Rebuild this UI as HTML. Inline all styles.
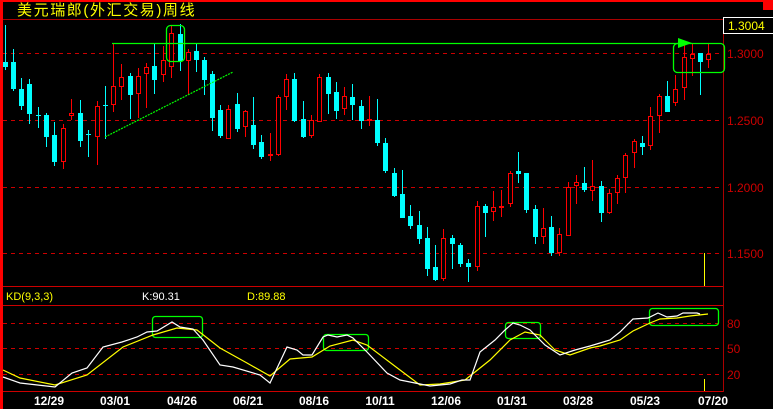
<!DOCTYPE html>
<html><head><meta charset="utf-8"><style>
html,body{margin:0;padding:0;background:#000;}
body{width:773px;height:409px;overflow:hidden;position:relative;}
svg{position:absolute;left:0;top:0;}
text{font-family:"Liberation Sans",sans-serif;}
</style></head><body>
<svg width="773" height="409" viewBox="0 0 773 409" xmlns="http://www.w3.org/2000/svg" shape-rendering="crispEdges">
<rect width="773" height="409" fill="#000"/>
<rect x="0" y="0" width="773" height="2" fill="#f00"/>
<rect x="0" y="0" width="3" height="409" fill="#f00"/>
<rect x="763" y="0" width="10" height="10" fill="#f00"/>
<text x="17" y="15" font-size="15" letter-spacing="1.6" fill="#ff0" style="font-family:'Liberation Sans','Noto Sans CJK SC',sans-serif">美元瑞郎(外汇交易)周线</text>
<line x1="3" y1="19.5" x2="723" y2="19.5" stroke="#a00"/>
<line x1="723.5" y1="19" x2="723.5" y2="392" stroke="#a00"/>
<g stroke="#c00" stroke-dasharray="4,4">
<line x1="3" y1="53.5" x2="722" y2="53.5"/><line x1="3" y1="120.5" x2="722" y2="120.5"/><line x1="3" y1="187.5" x2="722" y2="187.5"/><line x1="3" y1="253.5" x2="722" y2="253.5"/>
<line x1="3" y1="323.5" x2="722" y2="323.5"/><line x1="3" y1="348.5" x2="722" y2="348.5"/><line x1="3" y1="374.5" x2="722" y2="374.5"/>
</g>
<line x1="3" y1="286.5" x2="723" y2="286.5" stroke="#c00"/>
<line x1="3" y1="305.5" x2="723" y2="305.5" stroke="#c00"/>
<line x1="3" y1="391.5" x2="723" y2="391.5" stroke="#c00"/>
<rect x="723.5" y="17.5" width="50" height="16" fill="#000" stroke="#fff"/>
<text x="728" y="30" font-size="12" fill="#ff0">1.3004</text>
<g font-size="12" fill="#c00">
<text x="727" y="58">1.3000</text><text x="727" y="125">1.2500</text><text x="727" y="192">1.2000</text><text x="727" y="258">1.1500</text>
<text x="727" y="328">80</text><text x="727" y="353">50</text><text x="727" y="379">20</text>
</g>
<line x1="704.5" y1="253" x2="704.5" y2="286" stroke="#ff0"/>
<line x1="704.5" y1="379" x2="704.5" y2="391" stroke="#ff0"/>
<path fill="none" stroke="#0ff" d="M5.5 25V70M13.5 49V91M21.5 78V110M29.5 79V124M38.5 107V128M46.5 113V147M54.5 122V166M80.5 100V147M88.5 130V157M105.5 86V139M130.5 73V119M154.5 44V94M180.5 24V71M196.5 43V72M204.5 57V95M212.5 71V131M220.5 105V138M237.5 93V132M253.5 97V149M261.5 135V159M294.5 73V122M303.5 101V138M328.5 73V114M336.5 82V119M352.5 84V120M361.5 100V129M377.5 99V146M385.5 138V173M394.5 168V197M402.5 170V218M410.5 205V229M419.5 211V244M427.5 227V276M435.5 245V281M452.5 235V269M460.5 243V267M468.5 259V282M485.5 204V237M518.5 152V183M526.5 173V213M535.5 205V244M551.5 216V256M584.5 167V192M601.5 181V222M642.5 136V155M667.5 81V112M700.5 53V95"/>
<path fill="none" stroke="#f00" d="M63.5 124V169M71.5 99V120M97.5 101V165M113.5 43V112M121.5 64V100M138.5 68V118M146.5 63V108M163.5 46V82M171.5 26V78M188.5 49V95M228.5 105V139M245.5 110V137M270.5 133V161M278.5 95V156M286.5 74V110M311.5 115V138M319.5 74V122M344.5 87V115M369.5 96V126M443.5 229V281M477.5 201V271M493.5 191V221M501.5 190V217M510.5 171V207M543.5 208V244M559.5 228V256M568.5 182V236M576.5 175V204M592.5 160V201M609.5 189V214M617.5 175V204M625.5 153V193M634.5 139V168M650.5 107V150M659.5 94V133M675.5 75V106M684.5 43V100M692.5 44V76M708.5 43V68"/>
<g fill="#0ff">
<rect x="3" y="62" width="5" height="5"/><rect x="11" y="62" width="5" height="27"/><rect x="19" y="89" width="5" height="17"/><rect x="27" y="84" width="5" height="30"/><rect x="36" y="115" width="5" height="1"/><rect x="44" y="115" width="5" height="22"/><rect x="52" y="135" width="5" height="27"/><rect x="78" y="113" width="5" height="28"/><rect x="86" y="134" width="5" height="1"/><rect x="103" y="105" width="5" height="1"/><rect x="128" y="76" width="5" height="19"/><rect x="152" y="66" width="5" height="14"/><rect x="178" y="34" width="5" height="27"/><rect x="194" y="51" width="5" height="9"/><rect x="202" y="60" width="5" height="20"/><rect x="210" y="74" width="5" height="44"/><rect x="218" y="110" width="5" height="26"/><rect x="235" y="104" width="5" height="25"/><rect x="251" y="125" width="5" height="20"/><rect x="259" y="142" width="5" height="15"/><rect x="292" y="79" width="5" height="42"/><rect x="301" y="119" width="5" height="18"/><rect x="326" y="77" width="5" height="17"/><rect x="334" y="92" width="5" height="19"/><rect x="350" y="97" width="5" height="8"/><rect x="359" y="106" width="5" height="15"/><rect x="375" y="120" width="5" height="23"/><rect x="383" y="143" width="5" height="28"/><rect x="392" y="173" width="5" height="23"/><rect x="400" y="194" width="5" height="24"/><rect x="408" y="216" width="5" height="10"/><rect x="417" y="225" width="5" height="14"/><rect x="425" y="238" width="5" height="31"/><rect x="433" y="267" width="5" height="13"/><rect x="450" y="238" width="5" height="6"/><rect x="458" y="245" width="5" height="19"/><rect x="466" y="263" width="5" height="4"/><rect x="483" y="206" width="5" height="7"/><rect x="516" y="171" width="5" height="3"/><rect x="524" y="173" width="5" height="37"/><rect x="533" y="209" width="5" height="28"/><rect x="549" y="227" width="5" height="26"/><rect x="582" y="183" width="5" height="7"/><rect x="599" y="186" width="5" height="27"/><rect x="640" y="143" width="5" height="4"/><rect x="665" y="96" width="5" height="16"/><rect x="698" y="53" width="5" height="9"/>
</g>
<g fill="#000" stroke="#f00">
<rect x="61.5" y="128.5" width="4" height="33"/><rect x="69.5" y="113.5" width="4" height="2"/><rect x="95.5" y="106.5" width="4" height="30"/><rect x="111.5" y="86.5" width="4" height="18"/><rect x="119.5" y="77.5" width="4" height="9"/><rect x="136.5" y="76.5" width="4" height="17"/><rect x="144.5" y="67.5" width="4" height="6"/><rect x="161.5" y="60.5" width="4" height="14"/><rect x="169.5" y="33.5" width="4" height="33"/><rect x="186.5" y="52.5" width="4" height="8"/><rect x="226.5" y="109.5" width="4" height="29"/><rect x="243.5" y="111.5" width="4" height="15"/><rect x="268.5" y="154.5" width="4" height="1"/><rect x="276.5" y="97.5" width="4" height="57"/><rect x="284.5" y="79.5" width="4" height="17"/><rect x="309.5" y="120.5" width="4" height="15"/><rect x="317.5" y="77.5" width="4" height="44"/><rect x="342.5" y="96.5" width="4" height="12"/><rect x="367.5" y="119.5" width="4" height="1"/><rect x="441.5" y="238.5" width="4" height="40"/><rect x="475.5" y="206.5" width="4" height="60"/><rect x="491.5" y="207.5" width="4" height="4"/><rect x="499.5" y="206.5" width="4" height="1"/><rect x="508.5" y="173.5" width="4" height="30"/><rect x="541.5" y="228.5" width="4" height="8"/><rect x="557.5" y="234.5" width="4" height="18"/><rect x="566.5" y="187.5" width="4" height="48"/><rect x="574.5" y="182.5" width="4" height="3"/><rect x="590.5" y="186.5" width="4" height="4"/><rect x="607.5" y="193.5" width="4" height="19"/><rect x="615.5" y="178.5" width="4" height="14"/><rect x="623.5" y="155.5" width="4" height="22"/><rect x="632.5" y="141.5" width="4" height="11"/><rect x="648.5" y="116.5" width="4" height="29"/><rect x="657.5" y="96.5" width="4" height="19"/><rect x="673.5" y="89.5" width="4" height="13"/><rect x="682.5" y="57.5" width="4" height="30"/><rect x="690.5" y="54.5" width="4" height="4"/><rect x="706.5" y="54.5" width="4" height="5"/>
</g>
<g shape-rendering="auto">
<line x1="112" y1="43.5" x2="680" y2="43.5" stroke="#0f0" stroke-width="1.3"/>
<polygon points="678,38 678,48 692,43" fill="#0f0"/>
<line x1="105" y1="137" x2="233" y2="72" stroke="#0f0" stroke-width="1.2" stroke-dasharray="2,1"/>
<g fill="none" stroke="#0f0" stroke-width="1.3">
<rect x="166.5" y="25.5" width="18" height="36" rx="4"/>
<rect x="673.5" y="43.5" width="51" height="29" rx="4"/>
<rect x="152.5" y="316.5" width="50" height="21" rx="3"/>
<rect x="323.5" y="334.5" width="45" height="16" rx="3"/>
<rect x="505.5" y="322.5" width="35" height="16" rx="3"/>
<rect x="649.5" y="308.5" width="69" height="17" rx="3"/>
</g>
<polyline fill="none" stroke="#ff0" stroke-width="1.2" points="3,370 20,378 55,385 87,375 123,347 153,335 177,328 197,330 220,348 247,363 270,376 290,359 312,357 330,346 353,340 367,345 400,370 420,385 440,384 465,380 490,360 510,340 525,332 540,335 555,350 570,355 590,348 600,346 620,340 633,331 650,323 660,319 677,318 690,316 708,314"/>
<polyline fill="none" stroke="#fff" stroke-width="1.2" points="3,377 20,383 55,387 72,373 87,368 103,347 122,342 137,337 147,332 157,331 172,322 180,327 193,329 203,340 220,365 233,367 260,375 270,383 287,347 297,350 303,355 312,355 323,337 328,335 337,337 347,335 353,338 367,352 387,373 400,380 410,382 430,386 450,384 462,380 470,380 480,352 495,340 505,330 513,323 520,325 530,330 545,345 560,355 575,350 590,346 600,343 610,340 620,332 633,319 648,318 658,313 667,317 677,316 683,313 697,313 700,314"/>
</g>
<text x="6" y="300" font-size="11" fill="#ff0">KD(9,3,3)</text>
<text x="142" y="300" font-size="11" fill="#fff">K:90.31</text>
<text x="247" y="300" font-size="11" fill="#ff0">D:89.88</text>
<g font-size="12" font-weight="bold" fill="#fff" text-anchor="middle" style="font-family:'Liberation Mono',monospace">
<text x="49" y="405">12/29</text><text x="115" y="405">03/01</text><text x="182" y="405">04/26</text><text x="248" y="405">06/21</text><text x="314" y="405">08/16</text><text x="380" y="405">10/11</text><text x="446" y="405">12/06</text><text x="512" y="405">01/31</text><text x="578" y="405">03/28</text><text x="645" y="405">05/23</text><text x="713" y="405">07/20</text>
</g>
</svg>
</body></html>
